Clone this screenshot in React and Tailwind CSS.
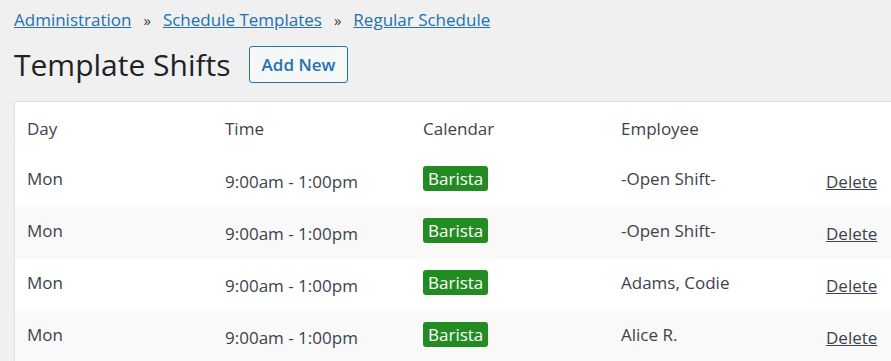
import React from "react";

const rows = [
  { day: "Mon", time: "9:00am - 1:00pm", cal: "Barista", emp: "-Open Shift-" },
  { day: "Mon", time: "9:00am - 1:00pm", cal: "Barista", emp: "-Open Shift-" },
  { day: "Mon", time: "9:00am - 1:00pm", cal: "Barista", emp: "Adams, Codie" },
  { day: "Mon", time: "9:00am - 1:00pm", cal: "Barista", emp: "Alice R." },
];

export default function App() {
  return (
    <div
      className="w-[891px] h-[361px] overflow-hidden bg-[#f0f0f1] text-[#3c434a]"
      style={{ fontFamily: '"Open Sans", "Noto Sans", sans-serif' }}
    >
      <div className="pl-[14px] pt-[6px]">
        <div className="flex items-center h-[28px] text-[17px] text-[#2271b1]">
          <a href="#" className="underline">Administration</a>
          <span className="mx-[12px] text-[#3c434a] text-[15px]">»</span>
          <a href="#" className="underline">Schedule Templates</a>
          <span className="mx-[12px] text-[#3c434a] text-[15px]">»</span>
          <a href="#" className="underline">Regular Schedule</a>
        </div>
        <div className="flex items-center mt-[12px] h-[37px]">
          <h1 className="text-[30px] text-[#1d2327] leading-none">Template Shifts</h1>
          <button className="ml-[18px] h-[37px] px-[12px] border border-[#2271b1] rounded-[3px] text-[#2271b1] font-semibold text-[17px] bg-[#f6f7f7]">
            Add New
          </button>
        </div>
        <div className="mt-[18px] bg-white border border-[#e0e0e0] border-r-0">
          <div className="grid grid-cols-[198px_198px_198px_198px_1fr] pl-[12px] h-[53px] items-center text-[17px]">
            <div className="mt-[1px]">Day</div>
            <div className="mt-[1px]">Time</div>
            <div className="mt-[1px]">Calendar</div>
            <div className="mt-[1px]">Employee</div>
            <div></div>
          </div>
          {rows.map((r, i) => (
            <div
              key={i}
              className={
                "grid grid-cols-[198px_198px_198px_198px_1fr] pl-[12px] h-[52px] items-center text-[17px] " +
                (i % 2 === 1 ? "bg-[#f9f9f9]" : "bg-white")
              }
            >
              <div className="-mt-[4px]">{r.day}</div>
              <div className="mt-[2px]">{r.time}</div>
              <div className="-mt-[4px]">
                <span className="inline-block bg-[#228b22] text-white rounded-[3px] px-[5px] h-[25px] leading-[25px]">
                  {r.cal}
                </span>
              </div>
              <div className="-mt-[4px]">{r.emp}</div>
              <div className="mt-[2px] pl-[7px]">
                <a href="#" className="underline text-[#3c434a]">Delete</a>
              </div>
            </div>
          ))}
        </div>
      </div>
    </div>
  );
}
